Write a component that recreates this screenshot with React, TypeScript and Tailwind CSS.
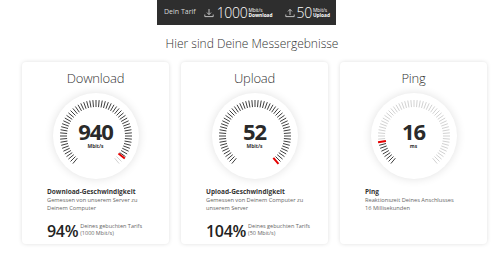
import React from "react";

const FONT = { fontFamily: '"Open Sans", "Noto Sans", sans-serif' };

function DownIcon() {
  return (
    <svg width="10" height="10" viewBox="0 0 10 10" fill="none" stroke="#cfcfcf" strokeWidth="0.9">
      <path d="M5 1 V6.5 M3 4.6 L5 6.6 L7 4.6" />
      <path d="M0.8 6.5 V8.6 H9.2 V6.5" />
    </svg>
  );
}
function UpIcon() {
  return (
    <svg width="10" height="10" viewBox="0 0 10 10" fill="none" stroke="#cfcfcf" strokeWidth="0.9">
      <path d="M5 7 V1.4 M3 3.4 L5 1.4 L7 3.4" />
      <path d="M0.8 6.5 V8.6 H9.2 V6.5" />
    </svg>
  );
}

function Gauge({ value, unit, red }: { value: string; unit: string; red: number }) {
  const ticks = [];
  const c = 43;
  for (let a = -140; a <= 140.01; a += 5) {
    if (Math.abs(a - red) < 3) continue;
    const col = a < red ? "#3d3d3d" : "#d2d2d2";
    const rad = (a * Math.PI) / 180;
    const s = Math.sin(rad);
    const co = -Math.cos(rad);
    ticks.push(
      <line
        key={a}
        x1={c + s * 29}
        y1={c + co * 29}
        x2={c + s * 36}
        y2={c + co * 36}
        stroke={col}
        strokeWidth="1"
      />
    );
  }
  const rr = (red * Math.PI) / 180;
  return (
    <div className="relative mt-[6px] h-[86px] w-[86px] rounded-full bg-white shadow-[0_0_10px_rgba(0,0,0,0.12)]">
      <svg width="86" height="86" viewBox="0 0 86 86" className="absolute left-0 top-0">
        {ticks}
        <line
          x1={c + Math.sin(rr) * 28.5}
          y1={c - Math.cos(rr) * 28.5}
          x2={c + Math.sin(rr) * 36.5}
          y2={c - Math.cos(rr) * 36.5}
          stroke="#e60000"
          strokeWidth="2"
        />
      </svg>
      <div className="absolute inset-0 flex flex-col items-center justify-center">
        <div className="mt-[-3px] text-[22px] font-bold leading-[22px] tracking-[-1px] text-[#2a2a2a]">{value}</div>
        <div className="mt-[1px] text-[5px] font-bold leading-[6px] text-[#333]">{unit}</div>
      </div>
    </div>
  );
}

function Card({
  title,
  value,
  unit,
  red,
  heading,
  lines,
  pct,
  pctLines,
}: {
  title: string;
  value: string;
  unit: string;
  red: number;
  heading: string;
  lines: string[];
  pct?: string;
  pctLines?: string[];
}) {
  return (
    <div className="flex h-[182px] w-[147px] flex-col items-center rounded-[4px] bg-white pt-[7px] shadow-[0_0_4px_rgba(0,0,0,0.13)]">
      <div className="text-[13px] font-light leading-[18px] tracking-[-0.2px] text-[#333]">{title}</div>
      <Gauge value={value} unit={unit} red={red} />
      <div className="mt-[8px] w-full px-[25px]">
        <div className="whitespace-nowrap text-[6.5px] font-bold leading-[9px] text-[#333]">{heading}</div>
        {lines.map((l) => (
          <div key={l} className="whitespace-nowrap text-[5.7px] leading-[8px] text-[#666]">
            {l}
          </div>
        ))}
        {pct && (
          <div className="mt-[10px] flex items-start gap-[2px]">
            <div className="text-[16px] font-semibold leading-[18px] tracking-[-0.3px] text-[#222]">{pct}</div>
            <div className="pt-[1px]">
              {pctLines!.map((l) => (
                <div key={l} className="whitespace-nowrap text-[5.5px] leading-[7px] text-[#666]">
                  {l}
                </div>
              ))}
            </div>
          </div>
        )}
      </div>
    </div>
  );
}

export default function App() {
  return (
    <div className="h-[261px] w-[494px] bg-white" style={FONT}>
      <div className="flex pl-[157px]">
        <div className="flex h-[25px] items-center bg-[#2e2e2e] pl-[7px] pr-[6px]">
          <span className="text-[7px] text-[#d8d8d8]">Dein Tarif</span>
          <span className="ml-[8px] mt-[1px]">
            <DownIcon />
          </span>
          <span className="ml-[3px] text-[14px] font-light leading-[16px] tracking-[-0.3px] text-white">1000</span>
          <span className="ml-[1px] flex flex-col text-[4.8px] leading-[5px] text-white">
            <span>Mbit/s</span>
            <span className="font-bold">Download</span>
          </span>
          <span className="ml-[12px] mt-[1px]">
            <UpIcon />
          </span>
          <span className="ml-[2px] text-[14px] font-light leading-[16px] tracking-[-0.3px] text-white">50</span>
          <span className="ml-[1px] flex flex-col text-[4.8px] leading-[5px] text-white">
            <span>Mbit/s</span>
            <span className="font-bold">Upload</span>
          </span>
        </div>
      </div>
      <div className="mt-[11px] flex justify-center pl-[10px] text-[12px] font-light leading-[16px] text-[#333]">
        Hier sind Deine Messergebnisse
      </div>
      <div className="mt-[10px] flex gap-[12px] pl-[22px]">
        <Card
          title="Download"
          value="940"
          unit="Mbit/s"
          red={128}
          heading="Download-Geschwindigkeit"
          lines={["Gemessen von unserem Server zu", "Deinem Computer"]}
          pct="94%"
          pctLines={["Deines gebuchten Tarifs", "(1000 Mbit/s)"]}
        />
        <Card
          title="Upload"
          value="52"
          unit="Mbit/s"
          red={140}
          heading="Upload-Geschwindigkeit"
          lines={["Gemessen von Deinem Computer zu", "unserem Server"]}
          pct="104%"
          pctLines={["Deines gebuchten Tarifs", "(50 Mbit/s)"]}
        />
        <Card
          title="Ping"
          value="16"
          unit="ms"
          red={-100}
          heading="Ping"
          lines={["Reaktionszeit Deines Anschlusses", "16 Millisekunden"]}
        />
      </div>
    </div>
  );
}
